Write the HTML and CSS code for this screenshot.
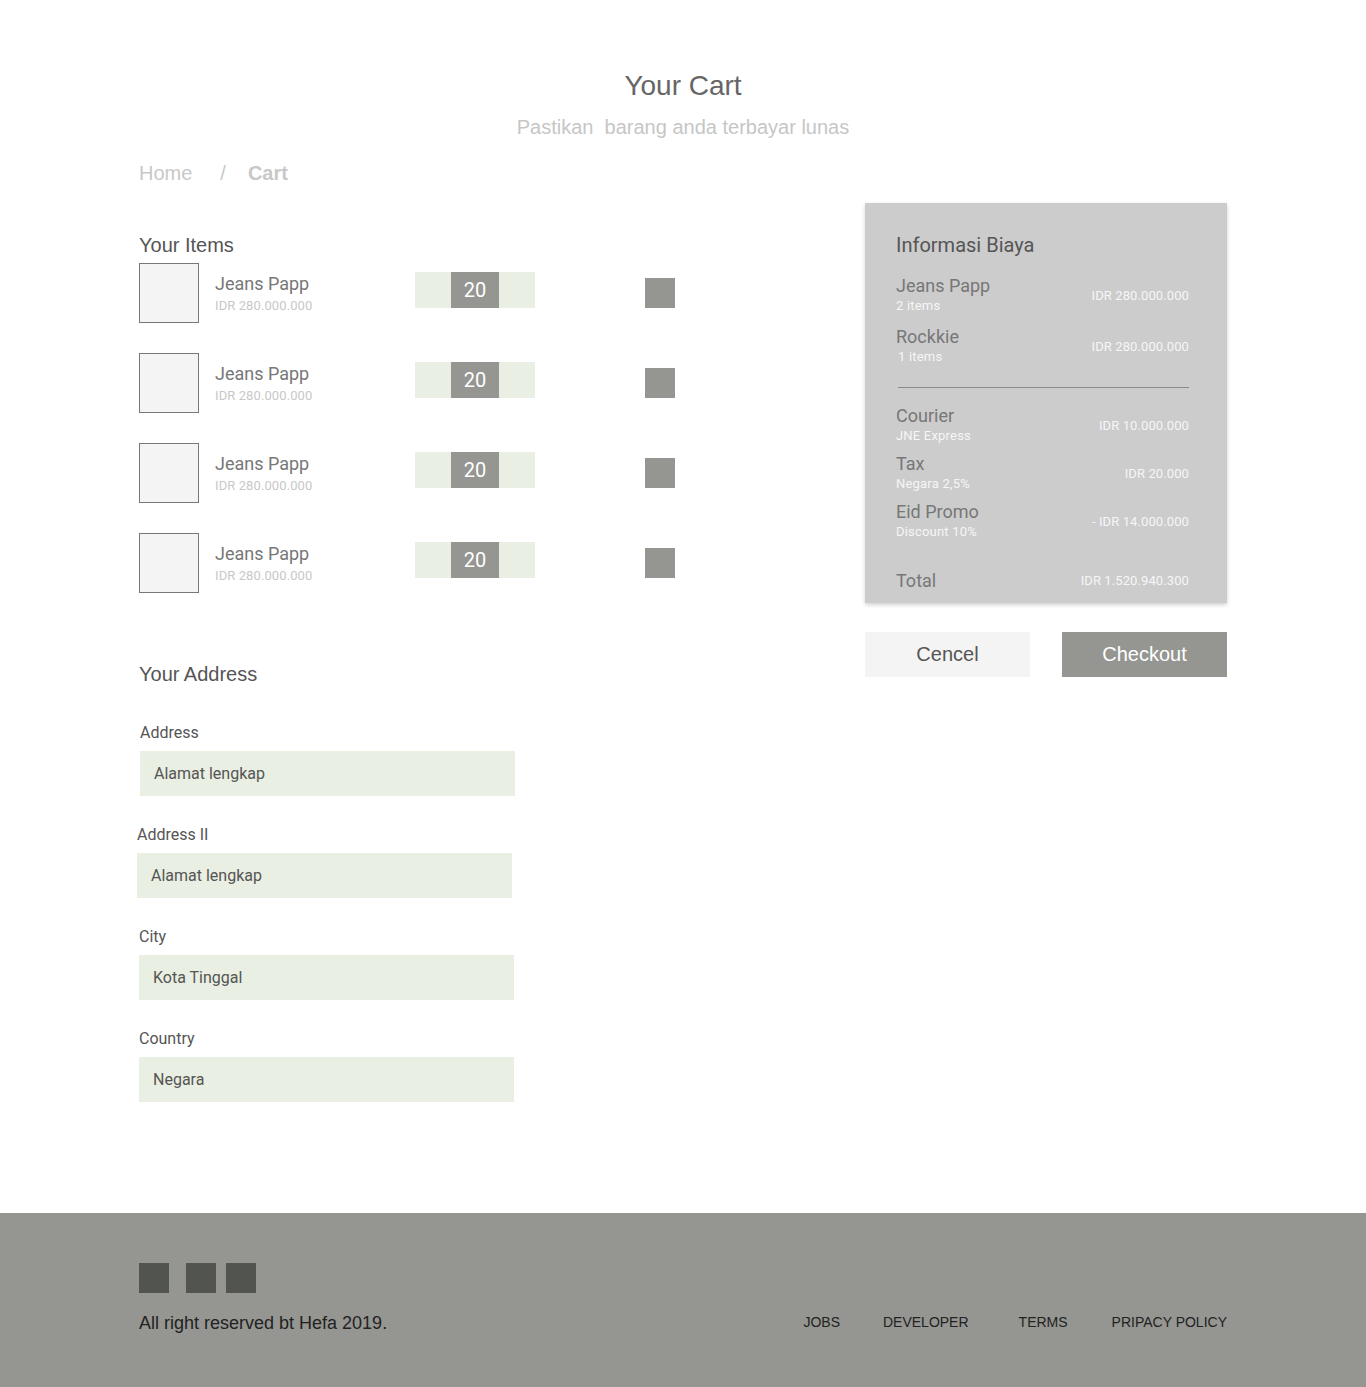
FILE: index.html
```html
<!DOCTYPE html>
<html lang="id">
<head>
<meta charset="utf-8">
<title>Your Cart</title>
<link rel="stylesheet" href="styles.css">
</head>
<body>
<div class="page">
  <header class="head">
    <h1 class="title">Your Cart</h1>
    <p class="subtitle">Pastikan&nbsp; barang anda terbayar lunas</p>
  </header>
  <nav class="crumbs"><span class="crumb">Home</span><span class="sep">/</span><span class="crumb current">Cart</span></nav>

  <main class="main">
    <section class="left">
      <h2 class="section-title">Your Items</h2>
      <div class="items">
        <div class="item">
          <div class="thumb"></div>
          <div class="info"><div class="name">Jeans Papp</div><div class="price">IDR 280.000.000</div></div>
          <div class="qty"><span class="qty-side"></span><span class="qty-num">20</span><span class="qty-side"></span></div>
          <div class="del"></div>
        </div>
        <div class="item">
          <div class="thumb"></div>
          <div class="info"><div class="name">Jeans Papp</div><div class="price">IDR 280.000.000</div></div>
          <div class="qty"><span class="qty-side"></span><span class="qty-num">20</span><span class="qty-side"></span></div>
          <div class="del"></div>
        </div>
        <div class="item">
          <div class="thumb"></div>
          <div class="info"><div class="name">Jeans Papp</div><div class="price">IDR 280.000.000</div></div>
          <div class="qty"><span class="qty-side"></span><span class="qty-num">20</span><span class="qty-side"></span></div>
          <div class="del"></div>
        </div>
        <div class="item">
          <div class="thumb"></div>
          <div class="info"><div class="name">Jeans Papp</div><div class="price">IDR 280.000.000</div></div>
          <div class="qty"><span class="qty-side"></span><span class="qty-num">20</span><span class="qty-side"></span></div>
          <div class="del"></div>
        </div>
      </div>

      <h2 class="section-title address-title">Your Address</h2>
      <form class="form">
        <div class="field f1"><label class="label">Address</label><div class="input">Alamat lengkap</div></div>
        <div class="field f2"><label class="label">Address II</label><div class="input">Alamat lengkap</div></div>
        <div class="field f3"><label class="label">City</label><div class="input">Kota Tinggal</div></div>
        <div class="field f3"><label class="label">Country</label><div class="input">Negara</div></div>
      </form>
    </section>

    <aside class="right">
      <div class="card">
        <h3 class="card-title">Informasi Biaya</h3>
        <div class="row first"><div><div class="r-name">Jeans Papp</div><div class="r-sub">2 items</div></div><div class="r-val">IDR 280.000.000</div></div>
        <div class="row"><div><div class="r-name">Rockkie</div><div class="r-sub indent">1 items</div></div><div class="r-val">IDR 280.000.000</div></div>
        <hr class="divider">
        <div class="row tight"><div><div class="r-name">Courier</div><div class="r-sub">JNE Express</div></div><div class="r-val">IDR 10.000.000</div></div>
        <div class="row tight"><div><div class="r-name">Tax</div><div class="r-sub">Negara 2,5%</div></div><div class="r-val">IDR 20.000</div></div>
        <div class="row tight"><div><div class="r-name">Eid Promo</div><div class="r-sub">Discount 10%</div></div><div class="r-val">- IDR 14.000.000</div></div>
        <div class="row total"><div class="r-name">Total</div><div class="r-val">IDR 1.520.940.300</div></div>
      </div>
      <div class="actions">
        <button class="btn cancel" type="button">Cencel</button>
        <button class="btn checkout" type="button">Checkout</button>
      </div>
    </aside>
  </main>
</div>

<footer class="footer">
  <div class="footer-inner">
    <div class="socials"><span class="sq"></span><span class="sq s2"></span><span class="sq s3"></span></div>
    <div class="footer-bottom">
      <p class="copy">All right reserved bt Hefa 2019.</p>
      <ul class="links">
        <li>JOBS</li>
        <li class="l2">DEVELOPER</li>
        <li class="l3">TERMS</li>
        <li class="l4">PRIPACY POLICY</li>
      </ul>
    </div>
  </div>
</footer>
</body>
</html>
```

FILE: styles.css
```css
* { box-sizing: border-box; }
html, body { margin: 0; padding: 0; background: #fff; }
body { font-family: Roboto, "Liberation Sans", Arial, sans-serif; color: #555; }

.page { width: 1088px; margin: 0 auto; padding-top: 70px; }

.head { text-align: center; }
.title { margin: 0; font-family: "Liberation Sans", Arial, sans-serif; font-weight: 400; font-size: 28px; line-height: 32px; color: #666; }
.subtitle { margin: 13px 0 0; font-family: "Liberation Sans", Arial, sans-serif; font-size: 20px; line-height: 24px; color: #c6c6c6; }

.crumbs { margin-top: 22px; font-family: "Liberation Sans", Arial, sans-serif; font-size: 20px; line-height: 24px; color: #c8c8c8; display: flex; }
.sep { margin-left: 28px; margin-right: 22px; }
.crumb.current { font-weight: 700; }

.main { margin-top: 18px; display: grid; grid-template-columns: 1fr 362px; }
.left { padding-top: 30px; }

.section-title { margin: 0; font-weight: 400; font-size: 20px; line-height: 24px; color: #555; font-family: "Liberation Sans", Arial, sans-serif; }

.items { margin-top: 6px; display: flex; flex-direction: column; gap: 30px; }
.item { display: flex; align-items: flex-start; height: 60px; }
.thumb { width: 60px; height: 60px; border: 1px solid #777; background: #f4f4f4; flex: none; }
.info { width: 200px; margin-left: 16px; padding-top: 10px; }
.name { font-size: 18px; line-height: 21px; color: #777; }
.price { margin-top: 3px; font-size: 13px; line-height: 18px; color: #c8c8c8; letter-spacing: 0.1px; }
.qty { margin-top: 9px; display: flex; width: 120px; height: 36px; background: #e9efe2; }
.qty-side { width: 36px; }
.qty-num { width: 48px; background: #959691; color: #fff; font-size: 20px; line-height: 36px; text-align: center; }
.del { margin-left: 110px; margin-top: 15px; width: 30px; height: 30px; background: #959691; }

.address-title { margin-top: 69px; }
.form { margin-top: 37px; display: flex; flex-direction: column; gap: 29px; }
.field { width: 375px; }
.f1 { margin-left: 1px; }
.f2 { margin-left: -2px; }
.label { display: block; font-size: 16px; line-height: 19px; color: #555; }
.input { margin-top: 9px; height: 45px; background: #e9efe2; padding-left: 14px; font-size: 16px; line-height: 45px; color: #555; }

.card { background: #cccccc; padding: 30px 38px 12px 31px; box-shadow: 0 2px 4px rgba(0,0,0,0.18); }
.card-title { margin: 0 0 18px; font-weight: 400; font-size: 20px; line-height: 24px; color: #555; }
.row { display: flex; justify-content: space-between; align-items: center; }
.row + .row { margin-top: 11px; }
.row.tight + .row.tight { margin-top: 8px; }
.r-name { font-size: 18px; line-height: 21px; color: #777; }
.r-sub { font-size: 13px; line-height: 19px; color: #f6f6f6; letter-spacing: 0.2px; }
.r-sub.indent { padding-left: 2px; }
.r-val { font-size: 13px; color: #f6f6f6; padding-top: 1px; letter-spacing: 0.1px; }
.divider { margin: 21px 0 17px 2px; border: 0; border-top: 1px solid #8a8a8a; height: 0; }
.row.total { margin-top: 29px; }
.row.total .r-val { padding-top: 0; }

.actions { margin-top: 29px; display: flex; justify-content: space-between; }
.btn { width: 165px; height: 45px; border: 0; font-family: "Liberation Sans", Arial, sans-serif; font-size: 20px; padding: 0; }
.cancel { background: #f4f4f4; color: #555; }
.checkout { background: #959691; color: #fff; }

.footer { margin-top: 111px; background: #959691; }
.footer-inner { width: 1088px; margin: 0 auto; padding: 50px 0 54px; }
.socials { display: flex; }
.sq { width: 30px; height: 30px; background: #52554f; }
.s2 { margin-left: 17px; }
.s3 { margin-left: 10px; }
.footer-bottom { margin-top: 20px; display: flex; justify-content: space-between; align-items: flex-end; }
.copy { margin: 0; font-family: "Liberation Sans", Arial, sans-serif; font-size: 18px; line-height: 21px; color: #222; }
.links { margin: 0; padding: 0; list-style: none; display: flex; font-family: "Liberation Sans", Arial, sans-serif; font-size: 14px; line-height: 18px; color: #222; padding-bottom: 3px; }
.l2 { margin-left: 43px; }
.l3 { margin-left: 50px; }
.l4 { margin-left: 44px; }
```
